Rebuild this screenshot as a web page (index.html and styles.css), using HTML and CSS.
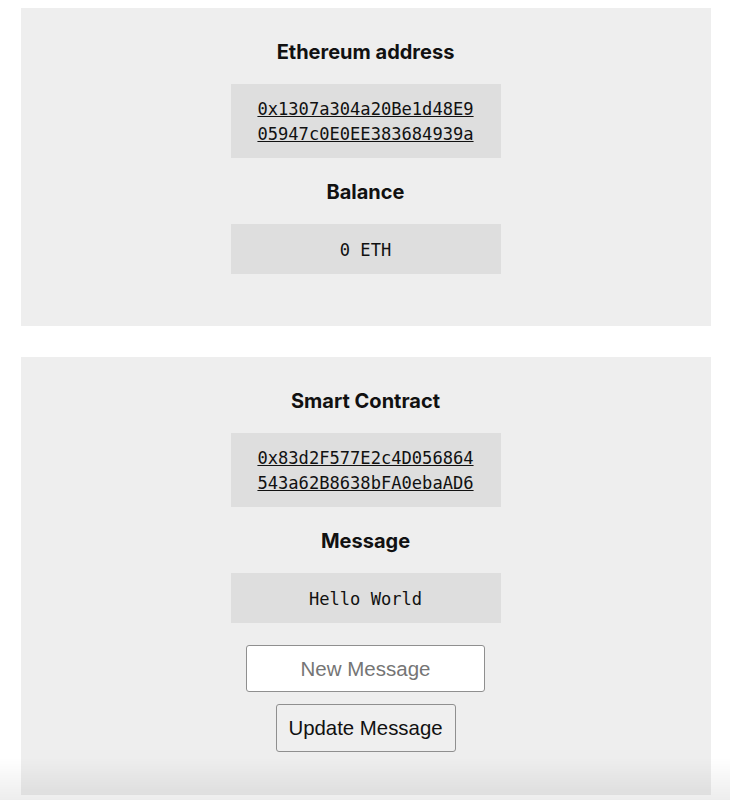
FILE: index.html
```html
<!DOCTYPE html>
<html lang="en">
<head>
<meta charset="utf-8">
<title>Ethereum Wallet</title>
<link rel="stylesheet" href="styles.css">
</head>
<body>
<main class="page">
  <section class="card">
    <h3 class="label">Ethereum address</h3>
    <div class="code-box"><a class="code-link" href="#">0x1307a304a20Be1d48E905947c0E0EE383684939a</a></div>
    <h3 class="label">Balance</h3>
    <div class="code-box code-single">0 ETH</div>
  </section>
  <section class="card card-contract">
    <h3 class="label">Smart Contract</h3>
    <div class="code-box"><a class="code-link" href="#">0x83d2F577E2c4D056864543a62B8638bFA0ebaAD6</a></div>
    <h3 class="label">Message</h3>
    <div class="code-box code-single">Hello World</div>
    <input class="msg-input" type="text" placeholder="New Message">
    <button class="update-btn" type="button">Update Message</button>
  </section>
</main>
<div class="bottom-fade"></div>
</body>
</html>
```
FILE: styles.css
```css
html, body {
  margin: 0;
  padding: 0;
  background: #ffffff;
}
body {
  padding-top: 8px;
  font-family: Inter, "Noto Sans", "Liberation Sans", sans-serif;
  color: #111111;
}
.page {
  display: flex;
  flex-direction: column;
  align-items: center;
  gap: 31px;
}
.card {
  width: 690px;
  margin-left: 1px;
  background: #eeeeee;
  display: flex;
  flex-direction: column;
  align-items: center;
  padding: 32px 0 52px;
  box-sizing: border-box;
}
.card-contract {
  padding-bottom: 43px;
}
.label {
  margin: 0 0 20px;
  font-size: 20px;
  line-height: 24px;
  font-weight: 700;
  color: #111111;
}
.code-box {
  width: 270px;
  box-sizing: border-box;
  background: #dedede;
  padding: 13px 25px 11px;
  margin-bottom: 22px;
  text-align: center;
  font-family: "DejaVu Sans Mono", "Liberation Mono", monospace;
  font-size: 17.1px;
  line-height: 25px;
  color: #111111;
  word-break: break-all;
}
.code-single {
  padding-top: 14px;
  padding-bottom: 11px;
}
.card > .code-box:last-child {
  margin-bottom: 0;
}
.code-link {
  color: #111111;
  text-decoration: underline;
}
.msg-input {
  width: 239px;
  height: 47px;
  box-sizing: border-box;
  margin: 0;
  border: 1px solid #8f8f8f;
  border-radius: 3px;
  background: #ffffff;
  text-align: center;
  font-family: "Liberation Sans", Arial, sans-serif;
  font-size: 20.5px;
  color: #111111;
}
.msg-input::placeholder {
  color: #757575;
}
.update-btn {
  margin-top: 12px;
  width: 180px;
  height: 48px;
  box-sizing: border-box;
  border: 1px solid #8f8f8f;
  border-radius: 3px;
  background: #efefef;
  font-family: "Liberation Sans", Arial, sans-serif;
  font-size: 20.4px;
  color: #111111;
}
.bottom-fade {
  position: fixed;
  left: 0;
  right: 0;
  bottom: 0;
  height: 42px;
  background: linear-gradient(to bottom, rgba(0,0,0,0), rgba(0,0,0,0.07));
  pointer-events: none;
}
```
